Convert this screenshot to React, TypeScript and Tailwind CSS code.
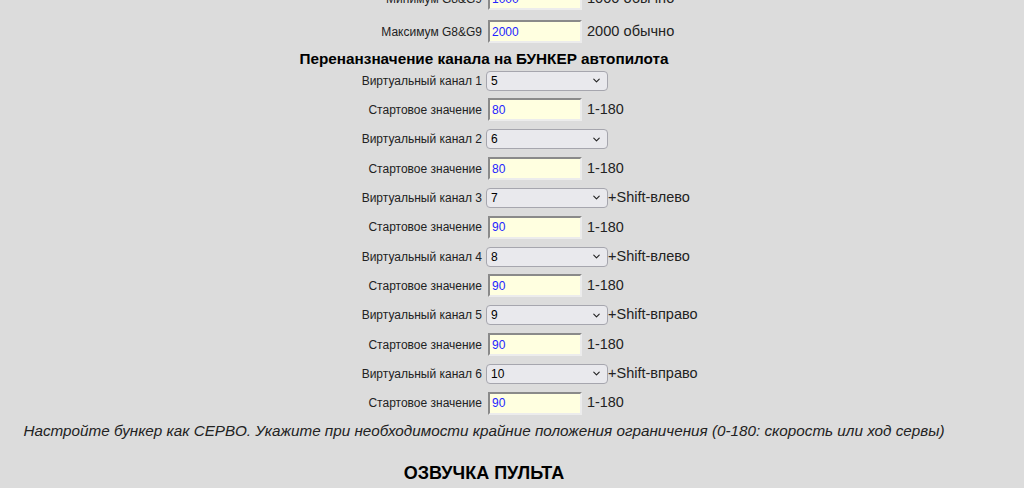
import { ChevronDown } from 'lucide-react'

const channels = [
  { n: 1, value: '5', start: '80', note: '' },
  { n: 2, value: '6', start: '80', note: '' },
  { n: 3, value: '7', start: '90', note: '+Shift-влево' },
  { n: 4, value: '8', start: '90', note: '+Shift-влево' },
  { n: 5, value: '9', start: '90', note: '+Shift-вправо' },
  { n: 6, value: '10', start: '90', note: '+Shift-вправо' },
]

function Label({ children }: { children: React.ReactNode }) {
  return <div className="w-[486px] shrink-0 pr-[4px] text-right text-[12px] text-[#222]">{children}</div>
}

function TextBox({ value }: { value: string }) {
  return (
    <div className="ml-[2px] flex h-[23px] w-[94px] items-center border-2 border-t-[#8a8a8a] border-l-[#8a8a8a] border-r-[#ececec] border-b-[#ececec] bg-[#ffffe0] pl-[2px] text-[12px] text-[#2424ff]">
      {value}
    </div>
  )
}

function Select({ value }: { value: string }) {
  return (
    <div className="flex h-[20px] w-[122px] items-center justify-between rounded-[4px] border border-[#a6a6ae] bg-[#e9e9ed] pl-[4px] pr-[5px] text-[12px] text-black">
      <span>{value}</span>
      <ChevronDown size={11} strokeWidth={2.4} className="text-[#222]" />
    </div>
  )
}

export default function App() {
  return (
    <div className="min-h-[488px] overflow-hidden bg-[#dcdcdc] font-['Liberation_Sans',Arial,sans-serif]">
      <div className="-mt-[16px] w-[968px]">
        {/* Limits */}
        <div className="flex h-[29px] items-center">
          <Label>Минимум G8&amp;G9</Label>
          <TextBox value="1000" />
          <span className="pl-[5px] text-[14.6px] text-[#222]">1000 обычно</span>
        </div>
        <div className="mt-[4px] flex h-[29px] items-center">
          <Label>Максимум G8&amp;G9</Label>
          <TextBox value="2000" />
          <span className="pl-[5px] text-[14.6px] text-[#222]">2000 обычно</span>
        </div>

        <div className="h-[20px] pt-[5px] text-center text-[15.3px] font-bold leading-[16px] text-black">
          Перенанзначение канала на БУНКЕР автопилота
        </div>

        {channels.map((c) => (
          <div key={c.n}>
            <div className="flex h-[29.33px] items-center">
              <Label>Виртуальный канал {c.n}</Label>
              <Select value={c.value} />
              {c.note && <span className="text-[14.5px] text-[#222]">{c.note}</span>}
            </div>
            <div className="flex h-[29.33px] items-center">
              <Label>Стартовое значение</Label>
              <TextBox value={c.start} />
              <span className="pl-[5px] text-[14.4px] text-[#222]">1-180</span>
            </div>
          </div>
        ))}

        <p className="mt-[3px] text-center text-[15.25px] italic leading-[20px] text-[#222]">
          Настройте бункер как СЕРВО. Укажите при необходимости крайние положения ограничения (0-180: скорость или ход сервы)
        </p>

        <h2 className="mt-[19px] text-center text-[18px] font-bold text-black">ОЗВУЧКА ПУЛЬТА</h2>
      </div>
    </div>
  )
}
